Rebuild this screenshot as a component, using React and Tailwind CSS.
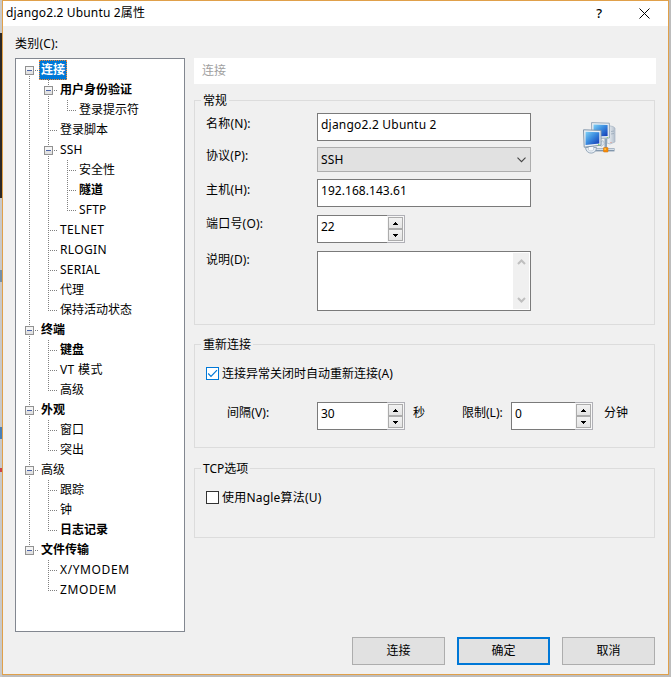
import React from 'react';
import clsx from 'clsx';

// guides: one character per column
//   "|" line passing through, " " empty, "t" branch, "l" last branch
//   "r" first expander, "e" expander, "x" last expander
const treeItems = [
    { label: '连接', guides: 'r', bold: true, selected: true },
    { label: '用户身份验证', guides: '|e', bold: true },
    { label: '登录提示符', guides: '||l' },
    { label: '登录脚本', guides: '|t' },
    { label: 'SSH', guides: '|e', className: 'tracking-[0.2px]' },
    { label: '安全性', guides: '||t' },
    { label: '隧道', guides: '||t', bold: true },
    { label: 'SFTP', guides: '||l', className: 'tracking-[0.2px]' },
    { label: 'TELNET', guides: '|t', className: 'tracking-[0.35px]' },
    { label: 'RLOGIN', guides: '|t', className: 'tracking-[0.35px]' },
    { label: 'SERIAL', guides: '|t', className: 'tracking-[0.25px]' },
    { label: '代理', guides: '|t' },
    { label: '保持活动状态', guides: '|l' },
    { label: '终端', guides: 'e', bold: true },
    { label: '键盘', guides: '|t', bold: true },
    { label: 'VT 模式', guides: '|t', className: 'tracking-[0.35px]' },
    { label: '高级', guides: '|l' },
    { label: '外观', guides: 'e', bold: true },
    { label: '窗口', guides: '|t' },
    { label: '突出', guides: '|l' },
    { label: '高级', guides: 'e' },
    { label: '跟踪', guides: '|t' },
    { label: '钟', guides: '|t' },
    { label: '日志记录', guides: '|l', bold: true },
    { label: '文件传输', guides: 'x', bold: true },
    { label: 'X/YMODEM', guides: ' t', className: 'tracking-[0.6px]' },
    { label: 'ZMODEM', guides: ' l', className: 'tracking-[0.6px]' },
];

const Guide = ({ type }) => {
    const top = type === 'r' ? 10 : 0;
    const bottom = type === 'l' || type === 'x' ? 11 : 20;
    const expander = 'rex'.includes(type);

    return (
        <svg width="19" height="20" className="shrink-0" shapeRendering="crispEdges">
            {type !== ' ' && (
                <path d={`M9.5 ${top}V${bottom}`} stroke="#808080" strokeDasharray="1 1" />
            )}
            {type !== ' ' && type !== '|' && (
                <path d="M9 10.5H18" stroke="#808080" strokeDasharray="1 1" />
            )}
            {expander && (
                <>
                    <rect x="4" y="5" width="11" height="11" fill="#fff" />
                    <rect x="5.5" y="6.5" width="8" height="8" fill="#f4f4f4" stroke="#919191" />
                    <rect x="6" y="11" width="7" height="3" fill="#e2e2e2" />
                    <path d="M7 10.5H12" stroke="#4b63a7" />
                </>
            )}
        </svg>
    );
};

const TreeRow = ({ item }) => (
    <div className="flex h-5 items-center">
        {item.guides.split('').map((g, i) => (
            <Guide key={i} type={g} />
        ))}
        <span
            className={clsx(
                'h-5 whitespace-nowrap px-0.5 leading-[19px]',
                item.bold && 'font-bold',
                item.selected && 'bg-[#0078d7] text-white outline-1 -outline-offset-1 outline-dotted outline-[#ff8728]',
                item.className
            )}
        >
            {item.label}
        </span>
    </div>
);

const Group = ({ title, className, children }) => (
    <div className={clsx('relative w-[461px] border border-[#dcdcdc]', className)}>
        <span className="absolute -top-[10px] left-1.5 bg-[#f0f0f0] px-0.5 leading-[19px]">{title}</span>
        {children}
    </div>
);

const Label = ({ className, children }) => (
    <span className={clsx('w-[111px] shrink-0 leading-[18px]', className)}>{children}</span>
);

const TextBox = ({ value, className }) => (
    <div className={clsx('h-7 w-[214px] border border-[#7a7a7a] bg-white px-[3px] leading-[22px]', className)}>{value}</div>
);

const SpinButton = ({ down }) => (
    <div className="flex h-3 w-[15px] items-center justify-center border border-[#acacac] bg-linear-to-b from-[#f2f2f2] to-[#e4e4e4]">
        <svg width="5" height="3" shapeRendering="crispEdges">
            <path d={down ? 'M0 0H5V1H4V2H3V3H2V2H1V1H0Z' : 'M2 0H3V1H4V2H5V3H0V2H1V1H2Z'} fill="#000" />
        </svg>
    </div>
);

const Spinner = ({ value, className }) => (
    <div className={clsx('flex h-7', className)}>
        <div className="flex-1 border border-r-0 border-[#7a7a7a] bg-white px-[3px] leading-[22px]">{value}</div>
        <div className="w-[18px] border border-l-0 border-[#b0b0b6] bg-[#f7f7f7] pl-px pt-px">
            <SpinButton />
            <SpinButton down />
        </div>
    </div>
);

const Checkbox = ({ checked, label, className }) => (
    <div className={clsx('flex h-[18px] items-start', className)}>
        <div className={clsx('mt-0.5 h-[13px] w-[13px] border bg-white', checked ? 'border-[#0078d7]' : 'border-[#333]')}>
            {checked && (
                <svg width="11" height="11" viewBox="0 0 11 11" fill="none">
                    <path d="M1.2 5.5L4 8.3L10 2.2" stroke="#0078d7" strokeWidth="1.2" />
                </svg>
            )}
        </div>
        <span className="ml-[3px] leading-[18px]">{label}</span>
    </div>
);

const Button = ({ primary, children }) => (
    <div
        className={clsx(
            'flex h-7 w-[93px] items-center justify-center bg-[#e1e1e1] pb-px',
            primary ? 'border-2 border-[#0078d7]' : 'border border-[#adadad]'
        )}
    >
        {children}
    </div>
);

const NetworkIcon = () => (
    <svg width="33" height="33" viewBox="0 0 33 33">
        <defs>
            <linearGradient id="screen" x1="0" y1="0" x2="1" y2="1">
                <stop offset="0" stopColor="#7fd0f5" />
                <stop offset="0.45" stopColor="#3c8ee0" />
                <stop offset="1" stopColor="#1238b4" />
            </linearGradient>
            <linearGradient id="tower" x1="0" y1="0" x2="1" y2="0">
                <stop offset="0" stopColor="#f7f9fb" />
                <stop offset="1" stopColor="#b3bfcc" />
            </linearGradient>
        </defs>
        <path d="M25 3.5L30 4.5L32 6V20L27 22L24 21Z" fill="url(#tower)" stroke="#a9b6c4" strokeWidth="0.7" />
        <path d="M28 9.5L31 9M28 12L31 11.5" stroke="#92a2b3" strokeWidth="0.7" />
        <path d="M8.5 0.6L26.4 1.2V16L9 16.5Z" fill="#e9eef3" stroke="#8ea1b4" strokeWidth="0.9" />
        <path d="M10.5 2.6L24.6 3.1V14.1L10.5 14.5Z" fill="url(#screen)" />
        <path d="M21.5 16.5H24V26H21.5Z" fill="#8ea3b8" />
        <path d="M16 21L20 18.5L21.5 22L18 24.5Z" fill="#dce5ed" stroke="#9fb0c1" strokeWidth="0.6" />
        <path d="M12 26.2H31.5V29.4H12Z" fill="#8196ac" />
        <path d="M13 27.3H31" stroke="#e4ebf2" strokeWidth="1.1" />
        <path d="M2.5 25.5C3 33 13.5 33 13.5 25.5Z" fill="#e6edf4" stroke="#8fa1b4" strokeWidth="0.9" />
        <path d="M5.5 24H10.5V28C9 29.2 7 29.2 5.5 28Z" fill="#f8fafc" stroke="#b4c1ce" strokeWidth="0.6" />
        <path d="M0.5 7.8L18 8.4V23.2L1.2 25.2Z" fill="#edf1f5" stroke="#8296aa" strokeWidth="1" />
        <path d="M2.5 9.8L16.3 10.2V21.6L2.5 23Z" fill="url(#screen)" />
        <circle cx="15.8" cy="22.7" r="0.8" fill="#7ddc4b" />
        <circle cx="24.3" cy="15.5" r="0.6" fill="#7ddc4b" />
        <circle cx="28" cy="20.5" r="0.5" fill="#e4735a" />
        <rect x="20.5" y="25.5" width="4.5" height="4.5" rx="0.5" fill="#f78b05" stroke="#d47a1b" strokeWidth="0.6" />
        <rect x="21.3" y="26.2" width="1.8" height="1.8" fill="#ffc23b" />
    </svg>
);

const TitleBar = () => (
    <div className="flex h-[25px] items-center justify-between bg-white pl-[3px] pr-[18px]">
        <span className="pb-px tracking-[0.15px]">django2.2 Ubuntu 2属性</span>
        <div className="flex items-center gap-[37px]">
            <span className="text-[13px] font-medium">?</span>
            <svg width="11" height="11" viewBox="0 0 11 11">
                <path d="M0.5 0.5L10.5 10.5M10.5 0.5L0.5 10.5" stroke="#000" strokeWidth="1" />
            </svg>
        </div>
    </div>
);

const App = () => {
    return (
        <div className="flex h-[677px] w-[671px] overflow-hidden bg-[#bdbdbd] font-['Noto_Sans','Noto_Sans_CJK_SC',sans-serif] text-[12px] text-black">
            {/* sliver of the desktop left of the dialog */}
            <div className="w-0.5 shrink-0 bg-[#c9c9c9] pt-[33px]">
                <div className="h-[165px] bg-[#2b2826]" />
                <div className="mt-[72px] h-3 bg-[#7590a8]" />
                <div className="mt-[145px] h-3 bg-[#4a7fb5]" />
                <div className="mt-[29px] h-1 bg-[#c8454a]" />
            </div>

            <div className="h-[675px] w-[667px] shrink-0 border border-[#e0a04a] bg-[#f0f0f0]">
                <TitleBar />

                <div className="flex pl-3">
                    <div className="w-[179px] shrink-0">
                        <div className="h-8 pt-[9px] leading-[18px] tracking-[0.2px]">类别(C):</div>
                        <div className="h-[574px] w-[170px] border border-[#828790] bg-white pl-1 pt-px">
                            {treeItems.map((item, i) => (
                                <TreeRow key={i} item={item} />
                            ))}
                        </div>
                    </div>

                    <div className="pt-8">
                        <div className="h-[26px] w-[462px] bg-white pl-2 leading-[25px] text-[#a0a0a0]">连接</div>

                        <Group title="常规" className="mt-4 h-[225px] pl-[11px] pt-3">
                            <div className="flex">
                                <div>
                                    <div className="flex">
                                        <Label className="pt-0.5 tracking-[0.2px]">名称(N):</Label>
                                        <TextBox value="django2.2 Ubuntu 2" className="tracking-[0.2px]" />
                                    </div>
                                    <div className="mt-1.5 flex">
                                        <Label className="tracking-[0.1px]">协议(P):</Label>
                                        <div className="flex h-[25px] w-[214px] items-center justify-between border border-[#adadad] bg-[#e1e1e1] pl-[3px] pr-1">
                                            <span className="tracking-[0.2px]">SSH</span>
                                            <svg width="9" height="6" viewBox="0 0 9 6" fill="none">
                                                <path d="M0.5 0.7L4.5 4.7L8.5 0.7" stroke="#444" strokeWidth="1.1" />
                                            </svg>
                                        </div>
                                    </div>
                                    <div className="mt-[7px] flex">
                                        <Label className="pt-0.5 tracking-[0.2px]">主机(H):</Label>
                                        <TextBox value="192.168.143.61" className="tracking-[0.05px]" />
                                    </div>
                                    <div className="mt-2 flex">
                                        <Label className="tracking-[0.2px]">端口号(O):</Label>
                                        <Spinner value="22" className="w-[88px]" />
                                    </div>
                                    <div className="mt-2 flex">
                                        <Label className="tracking-[0.1px]">说明(D):</Label>
                                        <div className="flex h-[60px] w-[214px] justify-end border border-[#7a7a7a] bg-white p-px">
                                            <div className="flex w-4 flex-col items-center justify-between bg-[#f0f0f0] py-1.5">
                                                <svg width="9" height="6" viewBox="0 0 9 6" fill="none">
                                                    <path d="M1 5L4.5 1.5L8 5" stroke="#bfbfbf" strokeWidth="2" />
                                                </svg>
                                                <svg width="9" height="6" viewBox="0 0 9 6" fill="none">
                                                    <path d="M1 1L4.5 4.5L8 1" stroke="#bfbfbf" strokeWidth="2" />
                                                </svg>
                                            </div>
                                        </div>
                                    </div>
                                </div>
                                <div className="ml-[52px] mt-[9px]">
                                    <NetworkIcon />
                                </div>
                            </div>
                        </Group>

                        <Group title="重新连接" className="mt-[19px] h-[104px] pl-[11px] pt-5">
                            <Checkbox checked label="连接异常关闭时自动重新连接(A)" />
                            <div className="mt-[19px] flex pl-[21px]">
                                <span className="w-[90px] pt-0.5 leading-[18px] tracking-[0.1px]">间隔(V):</span>
                                <Spinner value="30" className="w-[88px]" />
                                <span className="ml-2 w-[49px] pt-0.5 leading-[18px]">秒</span>
                                <span className="w-[49px] pt-0.5 leading-[18px]">限制(L):</span>
                                <Spinner value="0" className="w-[82px]" />
                                <span className="ml-[11px] pt-0.5 leading-[18px]">分钟</span>
                            </div>
                        </Group>

                        <Group title="TCP选项" className="mt-5 h-[70px] pl-[11px] pt-5">
                            <Checkbox label="使用Nagle算法(U)" className="tracking-[0.2px]" />
                        </Group>

                        <div className="mt-[99px] flex gap-3 pl-[158px]">
                            <Button>连接</Button>
                            <Button primary>确定</Button>
                            <Button>取消</Button>
                        </div>
                    </div>
                </div>
            </div>
        </div>
    );
};

export default App;
